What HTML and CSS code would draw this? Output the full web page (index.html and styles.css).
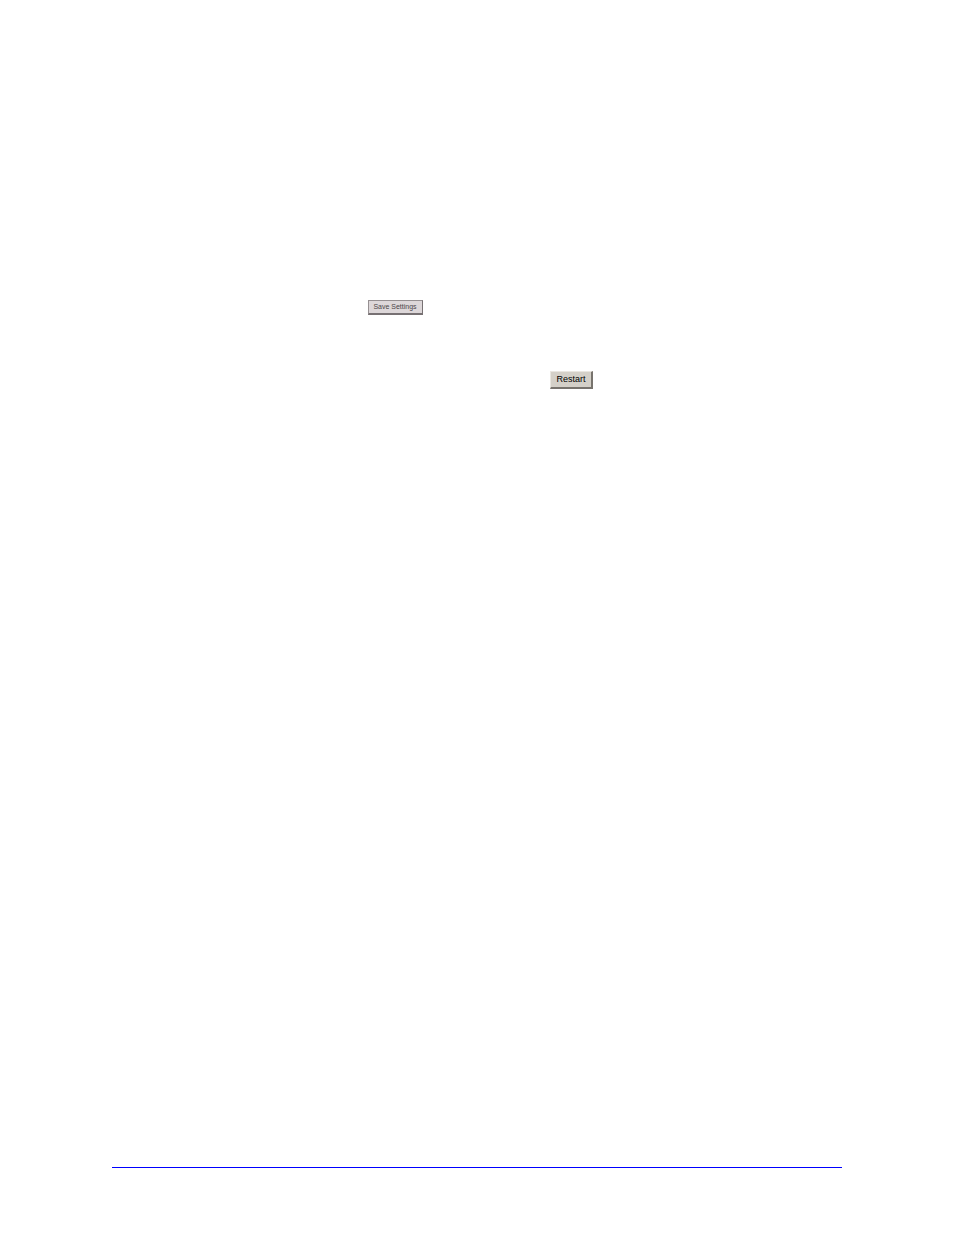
FILE: index.html
```html
<!DOCTYPE html>
<html lang="en">
    <head>
        <meta charset="utf-8">
        <meta name="viewport" content="width=device-width, initial-scale=1.0">
        <title>Settings</title>
        <link rel="stylesheet" href="styles.css">
    </head>
    <body>
        <main class="content">
            <div class="row save-row">
                <button class="save" type="button">Save Settings</button>
            </div>
            <div class="row restart-row">
                <button class="restart" type="button">Restart</button>
            </div>
        </main>
        <footer class="footer"></footer>
    </body>
</html>
```

FILE: styles.css
```css
body {
    display: flex;
    flex-direction: column;
    box-sizing: border-box;
    min-height: 100vh;
    margin: 0;
    padding: 300px 112px 67px;
    background: #fff;
    font-family: "Liberation Sans", Arial, sans-serif;
}

.content {
    display: flex;
    flex: 1;
    flex-direction: column;
    gap: 56px;
}

.row {
    display: flex;
}

.save-row {
    padding-left: 35%;
}

.restart-row {
    padding-left: 60%;
}

button {
    padding: 0;
    text-align: center;
    white-space: nowrap;
}

.save {
    width: 55px;
    height: 15px;
    border: 1px solid #969092;
    border-right-color: #777173;
    border-bottom: 2px solid #777173;
    background: #ddd7d9;
    color: #4b4648;
    font-family: "Liberation Sans Narrow", "Liberation Sans", Arial, sans-serif;
    font-size: 7px;
    line-height: 12px;
}

.restart {
    width: 43px;
    height: 18px;
    border: 1px solid #eae7e1;
    border-right: 2px solid #77736d;
    border-bottom: 2px solid #77736d;
    background: #d4d0c8;
    color: #000;
    font-size: 9px;
    line-height: 15px;
}

.footer {
    border-top: 1px solid #00f;
}
```
